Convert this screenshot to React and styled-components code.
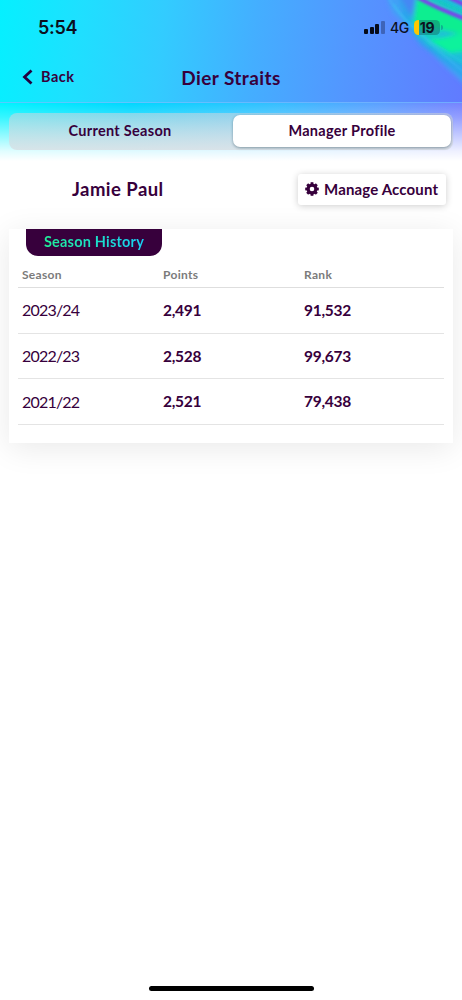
import React from 'react';
import styled, { createGlobalStyle } from 'styled-components';

const Global = createGlobalStyle`
  *, *::before, *::after { box-sizing: border-box; }
  body { margin: 0; background: #fff; font-family: Lato, "Liberation Sans", sans-serif; color: #37003c; }
  button { font: inherit; color: inherit; border: 0; padding: 0; background: none; }
`;

const Screen = styled.main`
  display: flex;
  flex-direction: column;
  height: 1000px;
  width: 462px;
  overflow: hidden;
  background: #fff;
`;

const Header = styled.header`
  position: relative;
  height: 103px;
  flex: none;
  background: linear-gradient(96deg, #05f0ff 0%, #1ee0ff 17%, #32ccff 35%, #44aeff 55%, #5396ff 75%, #617bff 100%);
  border-bottom: 1px solid rgba(120, 190, 255, 0.7);
`;

const Swirl = styled.svg`
  position: absolute;
  top: 0;
  right: 0;
`;

const StatusBar = styled.div`
  position: relative;
  display: flex;
  align-items: center;
  justify-content: space-between;
  height: 55px;
  padding: 0 20px 0 38px;
  font-family: Inter, sans-serif;
  color: #0b1020;
`;

const Clock = styled.span`
  font-size: 18px;
  font-weight: 600;
  letter-spacing: -0.3px;
  line-height: 22px;
`;

const StatusIcons = styled.div`
  display: flex;
  align-items: center;
`;

const Signal = styled.div`
  display: flex;
  align-items: flex-end;
  gap: 1.6px;
  height: 13px;
  margin-right: 5px;
`;

const Bar = styled.i`
  width: 4px;
  height: ${(p) => p.$height}px;
  border-radius: 1px;
  background: ${(p) => (p.$off ? 'rgba(25,35,80,0.4)' : '#060b18')};
`;

const Network = styled.span`
  font-size: 14px;
  font-weight: 500;
  line-height: 16px;
  width: 24px;
  letter-spacing: -0.5px;
`;

const Battery = styled.span`
  width: 26px;
  height: 15px;
  border-radius: 4.5px;
  background: linear-gradient(90deg, #ffc800 5px, rgba(20, 90, 100, 0.42) 5px);
  text-align: center;
  font-size: 14px;
  font-weight: 700;
  line-height: 15px;
  letter-spacing: -0.3px;
`;

const BatteryTip = styled.i`
  width: 2px;
  height: 5px;
  margin: 0 -1px 0 1px;
  border-radius: 0 2px 2px 0;
  background: rgba(20, 90, 130, 0.4);
`;

const NavBar = styled.nav`
  position: relative;
  display: grid;
  grid-template-columns: 1fr auto 1fr;
  align-items: center;
  height: 46px;
  padding: 0 22px;
`;

const Back = styled.button`
  display: flex;
  align-items: center;
  gap: 8px;
  margin-top: -2px;
  font-size: 14.5px;
  line-height: 16px;
  font-weight: 700;
  letter-spacing: 0.5px;
`;

const Title = styled.h1`
  margin: -1px 0 0;
  font-size: 19px;
  font-weight: 700;
  letter-spacing: 0.4px;
`;

const TabArea = styled.section`
  flex: none;
  height: 58px;
  padding: 10px 9px 0;
  background:
    linear-gradient(180deg, rgba(255,255,255,0) 0%, rgba(255,255,255,0.22) 25%, rgba(255,255,255,0.88) 83%, #fff 100%),
    linear-gradient(90deg, #00f4ff 0%, #00d7ff 28%, #35beff 60%, #5ba0ff 82%, #7783ff 100%);
`;

const Tabs = styled.div`
  display: grid;
  grid-template-columns: 222px 218px;
  gap: 2px;
  padding: 2px 2px 2px 0;
  height: 37px;
  border-radius: 8px;
  background: linear-gradient(180deg, rgba(205, 213, 221, 0.55), rgba(214, 219, 224, 0.72));
`;

const Tab = styled.button`
  height: 32px;
  padding-bottom: 1px;
  border-radius: 7px;
  font-size: 14.5px;
  font-weight: 700;
  letter-spacing: 0.3px;
  background: ${(p) => (p.$active ? '#fff' : 'transparent')};
  box-shadow: ${(p) => (p.$active ? '0 1px 3px rgba(0,40,60,0.4)' : 'none')};
`;

const Manager = styled.section`
  display: flex;
  align-items: center;
  justify-content: space-between;
  height: 68px;
  padding: 0 16px 11px 72px;
  flex: none;
`;

const Name = styled.h2`
  margin: -1px 0 0;
  font-size: 18.5px;
  line-height: 22px;
  font-weight: 700;
  letter-spacing: 0.45px;
`;

const Account = styled.button`
  display: flex;
  align-items: center;
  gap: 5px;
  width: 148px;
  height: 31px;
  padding: 0 0 1px 7px;
  border-radius: 3px;
  background: #fff;
  box-shadow: 0 1px 7px rgba(0, 0, 0, 0.2);
  font-size: 15px;
  font-weight: 700;
  letter-spacing: 0.15px;
  white-space: nowrap;
`;

const Card = styled.section`
  flex: none;
  height: 214px;
  margin: 0 9px;
  padding: 0 9px;
  background: #fff;
  box-shadow: 0 5px 30px rgba(0, 0, 0, 0.09);
`;

const Badge = styled.h3`
  margin: 0 0 0 8px;
  width: 136px;
  height: 27px;
  border-radius: 0 0 12px 12px;
  background: #37003c;
  text-align: center;
  font-size: 14.5px;
  line-height: 26px;
  font-weight: 700;
  letter-spacing: 0.2px;
`;

const BadgeText = styled.span`
  background: linear-gradient(90deg, #20f09a, #18cff5);
  background-clip: text;
  color: transparent;
`;

const Table = styled.table`
  width: 426px;
  table-layout: fixed;
  border-collapse: separate;
  border-spacing: 0;
`;

const HeadCell = styled.th`
  height: 32px;
  padding: 7px 0 0 4px;
  border-bottom: 1px solid #dedede;
  text-align: left;
  vertical-align: middle;
  font-size: 12px;
  line-height: 16px;
  font-weight: 700;
  letter-spacing: 0.3px;
  color: #7b7b7b;
`;

const Cell = styled.td`
  height: 45.7px;
  padding: 0 0 1px 4px;
  border-bottom: 1px solid #e4e4e4;
  font-size: ${(p) => (p.$bold ? 15.5 : 16)}px;
  font-weight: ${(p) => (p.$bold ? 700 : 400)};
  letter-spacing: ${(p) => (p.$bold ? -0.25 : -0.8)}px;
`;

const HomeIndicator = styled.div`
  flex: none;
  width: 165px;
  height: 5px;
  margin: auto auto 9px 149px;
  border-radius: 3px;
  background: #000;
`;

const seasons = [
  ['2023/24', '2,491', '91,532'],
  ['2022/23', '2,528', '99,673'],
  ['2021/22', '2,521', '79,438'],
];

const Gear = () => (
  <svg width="14" height="14" viewBox="-7 -7 14 14" fill="none" stroke="#37003c">
    <circle r="3.9" strokeWidth="3.2" />
    {[0, 45, 90, 135, 180, 225, 270, 315].map((a) => (
      <path key={a} d="M0-4V-6.8" strokeWidth="2.8" transform={`rotate(${a})`} />
    ))}
  </svg>
);

export default function App() {
  return (
    <Screen>
      <Global />
      <Header>
        <Swirl width="92" height="102" viewBox="0 0 92 102">
          <defs>
            <filter id="soft" filterUnits="userSpaceOnUse" x="-10" y="-20" width="130" height="140">
              <feGaussianBlur stdDeviation="2.2" />
            </filter>
            <filter id="fine" filterUnits="userSpaceOnUse" x="-10" y="-20" width="130" height="140">
              <feGaussianBlur stdDeviation="0.9" />
            </filter>
          </defs>
          <g filter="url(#soft)">
            <path d="M12-16L22 12L42 32Q66 60 110 98V-16Z" fill="#42a0f7" />
            <path d="M26-16L34 22L50 44L110 90V-16Z" fill="#2aa4ec" />
            <path d="M36-16L40 20L48 36L72 56L110 72V-16Z" fill="#1cbfd8" />
            <path d="M48-6L110 30V38L72 30L50 30L44 22Z" fill="#0cee90" />
            <path d="M56 40Q80 38 110 26V50L80 53Z" fill="#08f29c" />
            <path d="M22-16H48L42 18Z" fill="#4488f4" />
            <path d="M44 26L72 29L66 38L50 36Z" fill="#18d4bd" />
          </g>
          <g filter="url(#fine)" fill="none">
            <path d="M47-3Q66 8 98 20M74-5L99 7" stroke="#7a45ea" strokeWidth="4" />
            <path d="M60-2L98 14" stroke="#16c9c0" strokeWidth="3" />
            <path d="M19-2Q24 10 46 30T100 78" stroke="#46bdf8" strokeWidth="1.5" opacity="0.6" />
            <path d="M24 4Q42 34 100 66" stroke="#30c6ee" strokeWidth="1.5" opacity="0.5" />
          </g>
        </Swirl>
        <StatusBar>
          <Clock>5:54</Clock>
          <StatusIcons>
            <Signal><Bar $height={5} /><Bar $height={7} /><Bar $height={10} /><Bar $height={13} $off /></Signal>
            <Network>4G</Network>
            <Battery>19</Battery>
            <BatteryTip />
          </StatusIcons>
        </StatusBar>
        <NavBar>
          <Back>
            <svg width="11" height="16" viewBox="0 0 11 16" fill="none" stroke="#24003f" strokeWidth="2.8">
              <path d="M9.5 1.5L2.5 8L9.5 14.5" />
            </svg>
            Back
          </Back>
          <Title>Dier Straits</Title>
        </NavBar>
      </Header>
      <TabArea>
        <Tabs>
          <Tab>Current Season</Tab>
          <Tab $active>Manager Profile</Tab>
        </Tabs>
      </TabArea>
      <Manager>
        <Name>Jamie Paul</Name>
        <Account><Gear />Manage Account</Account>
      </Manager>
      <Card>
        <Badge><BadgeText>Season History</BadgeText></Badge>
        <Table>
          <colgroup><col width="141" /><col width="141" /><col width="144" /></colgroup>
          <thead><tr>{['Season', 'Points', 'Rank'].map((h) => <HeadCell key={h}>{h}</HeadCell>)}</tr></thead>
          <tbody>
            {seasons.map(([season, points, rank]) => (
              <tr key={season}><Cell>{season}</Cell><Cell $bold>{points}</Cell><Cell $bold>{rank}</Cell></tr>
            ))}
          </tbody>
        </Table>
      </Card>
      <HomeIndicator />
    </Screen>
  );
}
